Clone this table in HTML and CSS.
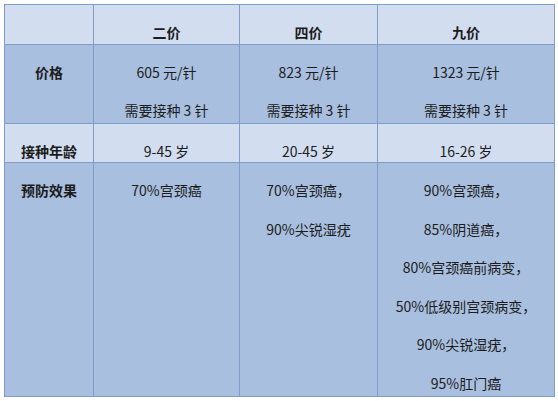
FILE: index.html
```html
<!DOCTYPE html>
<html lang="zh">
<head>
<meta charset="utf-8">
<link rel="stylesheet" href="styles.css">
</head>
<body>
<table class="cmp">
  <colgroup>
    <col class="c0"><col class="c1"><col class="c2"><col class="c3">
  </colgroup>
  <tr class="light r-head">
    <td></td>
    <th><p>二价</p></th>
    <th><p>四价</p></th>
    <th><p>九价</p></th>
  </tr>
  <tr class="dark r-price">
    <th><p>价格</p></th>
    <td><p>605 元/针</p><p>需要接种 3 针</p></td>
    <td><p>823 元/针</p><p>需要接种 3 针</p></td>
    <td><p>1323 元/针</p><p>需要接种 3 针</p></td>
  </tr>
  <tr class="light r-age">
    <th><p>接种年龄</p></th>
    <td><p>9-45 岁</p></td>
    <td><p>20-45 岁</p></td>
    <td><p>16-26 岁</p></td>
  </tr>
  <tr class="dark r-eff">
    <th><p>预防效果</p></th>
    <td><p>70%宫颈癌</p></td>
    <td><p>70%宫颈癌，</p><p>90%尖锐湿疣</p></td>
    <td><p>90%宫颈癌，</p><p>85%阴道癌，</p><p>80%宫颈癌前病变，</p><p>50%低级别宫颈病变，</p><p>90%尖锐湿疣，</p><p>95%肛门癌</p></td>
  </tr>
</table>
</body>
</html>
```

FILE: styles.css
```css
html, body {
  margin: 0;
  padding: 0;
  background: #ffffff;
}
body {
  padding: 4px 0 0 4px;
  font-family: "Noto Sans CJK SC", "Noto Sans", sans-serif;
  font-size: 14px;
  color: #1c1c1c;
}
.cmp {
  border-collapse: collapse;
  table-layout: fixed;
  width: 550px;
  border: 1px solid #8297b4;
}
.c0 { width: 89px; }
.c1 { width: 146px; }
.c2 { width: 138px; }
.c3 { width: 177px; }
.cmp td, .cmp th {
  border: 1px solid #7f9dc6;
  padding: 0;
  vertical-align: top;
  text-align: center;
  font-weight: normal;
}
.cmp th {
  font-weight: bold;
}
.cmp p {
  margin: 18px 0 0 0;
  line-height: 20px;
  height: 20px;
  white-space: nowrap;
}
.cmp p:first-child {
  margin-top: 17px;
}
.light { background: #d2deef; }
.dark { background: #a8bfdf; }
.r-head { height: 40px; }
.r-price { height: 79px; }
.r-age { height: 39px; }
.r-eff { height: 234px; }
.r-eff p { margin-top: 18.5px; }
.r-eff p:first-child { margin-top: 17px; }
```
